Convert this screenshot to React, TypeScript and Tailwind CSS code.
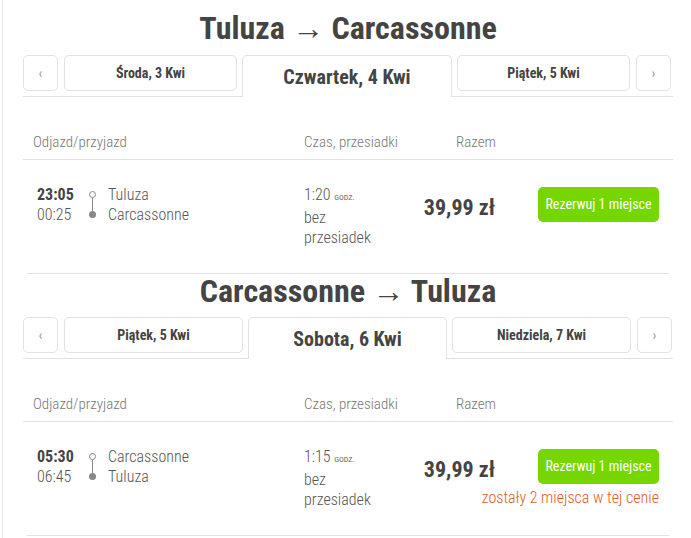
import React from "react";

const F = { fontFamily: "Roboto, 'Liberation Sans', sans-serif", fontStretch: "75%" } as React.CSSProperties;

type Tab = { label: string; w: number };

function Tabs({ left, active, right }: { left: Tab; active: Tab; right: Tab }) {
  return (
    <div className="relative flex items-start h-[42px] border-b border-[#e2e2e2]">
      <button className="w-[35px] h-[36px] border border-[#e2e2e2] rounded-[5px] text-[#999] text-[14px] flex items-center justify-center">‹</button>
      <div style={{ width: left.w }} className="ml-[6px] h-[36px] border border-[#e2e2e2] rounded-[5px] flex items-center justify-center text-[14px] font-bold text-[#444]">{left.label}</div>
      <div style={{ width: active.w }} className="ml-[5px] h-[42px] -mb-px border border-b-0 border-[#e2e2e2] rounded-t-[5px] bg-white flex items-center justify-center text-[20px] font-bold text-[#444]">{active.label}</div>
      <div style={{ width: right.w }} className="ml-[5px] h-[36px] border border-[#e2e2e2] rounded-[5px] flex items-center justify-center text-[14px] font-bold text-[#444]">{right.label}</div>
      <button className="ml-[6px] w-[35px] h-[36px] border border-[#e2e2e2] rounded-[5px] text-[#999] text-[14px] flex items-center justify-center">›</button>
    </div>
  );
}

function Connector() {
  return (
    <div className="w-[8px] flex flex-col items-center pt-[6px]">
      <div className="w-[7px] h-[7px] rounded-full border border-[#888]" />
      <div className="w-px h-[13px] bg-[#888]" />
      <div className="w-[7px] h-[7px] rounded-full bg-[#888]" />
    </div>
  );
}

function Section({
  from, to, left, active, right, dep, arr, dur, note, first,
}: {
  from: string; to: string; left: Tab; active: Tab; right: Tab; dep: string; arr: string; dur: string; note?: boolean; first?: boolean;
}) {
  return (
    <div className={first ? "pt-[11px]" : ""}>
      <h1 className={`text-center text-[32px] font-bold text-[#444] leading-[34px] ${first ? "h-[44px]" : "h-[43px]"}`}>
        {from} <span className="font-normal">→</span> {to}
      </h1>
      <Tabs left={left} active={active} right={right} />
      <div className="h-[63px] flex items-end pb-[6px] border-b border-[#e2e2e2] text-[15px] font-light text-[#777]">
        <div className="w-[281px] shrink-0 pl-[10px]">Odjazd/przyjazd</div>
        <div className="w-[152px] shrink-0">Czas, przesiadki</div>
        <div>Razem</div>
      </div>
      <div className="flex pt-[25px] h-[113px]">
        <div className="w-[281px] shrink-0 pl-[14px] flex text-[16px] leading-[20px] font-light text-[#555]">
          <div className="w-[51px]">
            <div className="font-bold text-[#444]">{dep}</div>
            <div>{arr}</div>
          </div>
          <Connector />
          <div className="ml-[12px]">
            <div>{from}</div>
            <div>{to}</div>
          </div>
        </div>
        <div className="w-[110px] shrink-0 text-[16px] leading-[20px] font-light text-[#555]">
          <div>{dur} <span className="text-[8px] uppercase text-[#666] font-normal">godz.</span></div>
          <div>bez</div>
          <div>przesiadek</div>
        </div>
        <div className="w-[81px] shrink-0 pt-[6px] text-right text-[22px] font-bold text-[#444]">39,99 zł</div>
        <div className="flex-1 min-w-0 flex flex-col items-end pr-[14px]">
          <button className="mt-[2px] w-[121px] h-[35px] shrink-0 rounded-[5px] bg-[#76d600] text-white text-[14px]">Rezerwuj 1 miejsce</button>
          {note && <div className="mt-[4px] whitespace-nowrap text-[16px] font-light text-[#e05a26] leading-[20px]">zostały 2 miejsca w tej cenie</div>}
        </div>
      </div>
    </div>
  );
}

export default function App() {
  return (
    <div className="w-[691px] h-[538px] bg-white overflow-hidden" style={F}>
      <div className="ml-[2px] h-full border-l border-[#e8e8e8] pl-[20px] pr-[18px]">
        <Section
          first
          from="Tuluza" to="Carcassonne"
          left={{ label: "Środa, 3 Kwi", w: 173 }}
          active={{ label: "Czwartek, 4 Kwi", w: 210 }}
          right={{ label: "Piątek, 5 Kwi", w: 173 }}
          dep="23:05" arr="00:25" dur="1:20"
        />
        <div className="mx-[4px] border-t border-[#e2e2e2]" />
        <Section
          from="Carcassonne" to="Tuluza"
          left={{ label: "Piątek, 5 Kwi", w: 179 }}
          active={{ label: "Sobota, 6 Kwi", w: 199 }}
          right={{ label: "Niedziela, 7 Kwi", w: 179 }}
          dep="05:30" arr="06:45" dur="1:15" note
        />
        <div className="mx-[4px] border-t border-[#e2e2e2]" />
      </div>
    </div>
  );
}
